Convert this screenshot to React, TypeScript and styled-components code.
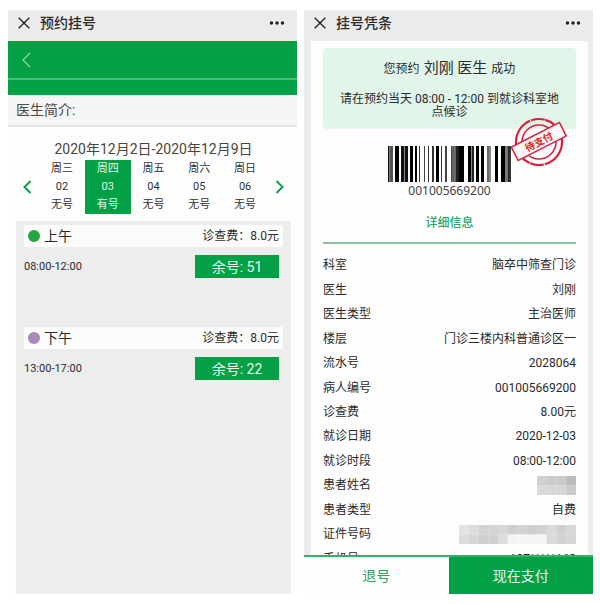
import React from 'react';
import styled, { createGlobalStyle } from 'styled-components';

const GREEN = '#03a045';

const GlobalStyle = createGlobalStyle`
  * { box-sizing: border-box; }
  body {
    margin: 0;
    background: #fff;
    color: #2b2b2b;
    font-family: Roboto, "Noto Sans CJK SC", sans-serif;
    font-size: 12px;
    line-height: 18px;
  }
  button { font: inherit; border: 0; padding: 0; background: none; color: inherit; cursor: pointer; }
  h1, h2, p, dl, dd { margin: 0; font-weight: 400; }
`;

const Page = styled.div`
  display: grid;
  grid-template-columns: 1fr 1fr;
  gap: 7px;
  height: 100vh;
  padding: 10px 7px 10px 8px;
`;

const Phone = styled.main`
  display: flex;
  flex-direction: column;
  min-width: 0;
  min-height: 0;
  background: #fdfdfd;
`;

const TitleBar = styled.header`
  display: flex;
  align-items: center;
  flex: none;
  height: 31px;
  padding: 0 12px 6px 10px;
  gap: 10px;
  background: #ebebeb;
  color: #1d1d1d;
`;

const Title = styled.h1`
  flex: 1;
  font-size: 14px;
  line-height: 20px;
  font-weight: 500;
  color: #2b2b2b;
`;

const IconButton = styled.button`
  display: flex;
  align-items: center;
  justify-content: center;
`;

const NavBar = styled.nav`
  display: flex;
  flex: none;
  height: 39px;
  padding: 0 14px;
  background: ${GREEN};
  border-bottom: 2px solid #4fb97c;
`;

const NavShade = styled.div`
  flex: none;
  height: 15px;
  background: ${GREEN};
`;

const Intro = styled.h2`
  flex: none;
  padding: 4px 8px;
  font-size: 14px;
  line-height: 22px;
  color: #4a4a4a;
  background: #f5f5f5;
  border-bottom: 2px solid #e4e4e4;
`;

const Week = styled.section`
  flex: none;
  padding: 12px 6px 7px 8px;
`;

const Range = styled.p`
  margin-bottom: 1px;
  font-size: 14px;
  line-height: 20px;
  text-align: center;
  color: #4b463a;
`;

const DayRow = styled.div`
  display: grid;
  grid-template-columns: 23px repeat(5, 1fr) 23px;
`;

const Day = styled.button<{ $active?: boolean }>`
  && {
    display: flex;
    flex-direction: column;
    align-items: center;
    font-size: 11px;
    line-height: 18px;
    color: ${p => (p.$active ? '#e6f7ec' : '#333')};
    background: ${p => (p.$active ? GREEN : 'transparent')};
  }
`;

const Sessions = styled.section`
  display: flex;
  flex-direction: column;
  flex: 1;
  gap: 49px;
  margin: 0 6px 0 8px;
  padding: 4px 8px;
  background: #ededed;
`;

const SessionHead = styled.div`
  display: flex;
  align-items: center;
  height: 22px;
  padding: 0 4px;
  gap: 4px;
  background: #fcfcfc;
`;

const Dot = styled.span<{ $color: string }>`
  width: 12px;
  height: 12px;
  border-radius: 50%;
  background: ${p => p.$color};
`;

const SessionName = styled.h2`
  flex: 1;
  font-size: 14px;
`;

const SessionBody = styled.div`
  display: flex;
  align-items: center;
  justify-content: space-between;
  padding: 8px 4px 0 0;
  font-size: 11px;
`;

const SlotButton = styled.button`
  width: 84px;
  height: 23px;
  && { font-size: 14px; color: #e9f8ee; background: ${GREEN}; }
`;

const Backdrop = styled.div`
  flex: 1;
  min-height: 0;
  padding: 0 5px 0 7px;
  background: #ececf0;
`;

const Card = styled.div`
  height: 100%;
  overflow: hidden;
  padding: 7px 12px 0;
  background: #fdfdfd;
`;

const Notice = styled.section`
  position: relative;
  padding: 10px 12px;
  border-radius: 4px;
  background: #e2f5e9;
  text-align: center;
`;

const NoticeLine = styled.p`
  line-height: 20px;
  margin-bottom: 14px;
`;

const Doctor = styled.span`
  margin: 0 4px;
  font-size: 15px;
`;

const NoticeText = styled.p`
  line-height: 13px;
`;

const Stamp = styled.svg`
  position: absolute;
  right: 8px;
  bottom: -39px;
`;

const CodeBlock = styled.figure`
  display: flex;
  flex-direction: column;
  align-items: center;
  margin: 17px 0 0;
`;

const CodeNumber = styled.figcaption`
  font-family: "Noto Sans", sans-serif;
  font-size: 12px;
  line-height: 17px;
  color: #444;
`;

const DetailTitle = styled.h2`
  padding: 15px 0 10px;
  font-size: 12px;
  font-weight: 500;
  text-align: center;
  color: #35a266;
  border-bottom: 2px solid #83c39e;
`;

const Details = styled.dl`
  display: grid;
  grid-auto-rows: 1fr;
  min-height: 318px;
  margin-top: 9px;
`;

const Detail = styled.div`
  display: flex;
  align-items: center;
  justify-content: space-between;
`;

const ActionBar = styled.footer`
  display: grid;
  grid-template-columns: 1fr 1fr;
  flex: none;
  height: 39px;
  border-top: 2px solid #35b069;
`;

const Action = styled.button<{ $primary?: boolean }>`
  && {
    font-size: 14px;
    color: ${p => (p.$primary ? '#e9f8ee' : '#2ba35c')};
    background: ${p => (p.$primary ? GREEN : '#fdfdfd')};
  }
`;

const Header = ({ title }: { title: string }) => (
  <TitleBar>
    <IconButton aria-label="关闭">
      <svg width="12" height="12" viewBox="0 0 12 12" stroke="#1d1d1d" strokeWidth="1.3">
        <path d="M.7 .7 11.3 11.3M11.3 .7 .7 11.3" />
      </svg>
    </IconButton>
    <Title>{title}</Title>
    <IconButton aria-label="更多">
      <svg width="16" height="6" viewBox="0 0 16 6" fill="#1d1d1d">
        <circle cx="2.5" cy="3" r="1.7" />
        <circle cx="8" cy="3" r="1.7" />
        <circle cx="13.5" cy="3" r="1.7" />
      </svg>
    </IconButton>
  </TitleBar>
);

const days = [
  ['周三', '02', '无号'],
  ['周四', '03', '有号'],
  ['周五', '04', '无号'],
  ['周六', '05', '无号'],
  ['周日', '06', '无号'],
];

const sessions = [
  { name: '上午', color: '#22a73f', time: '08:00-12:00', left: 51 },
  { name: '下午', color: '#a987b8', time: '13:00-17:00', left: 22 },
];

// Each bar: x, width, shade.
const bars: [number, number, string][] = [
  [0, 1, '#111'], [1, 1, '#777'], [2, 3, '#555'], [7, 4, '#000'], [13, 3, '#111'], [16, 1, '#888'], [17, 3, '#111'],
  [22, 3, '#000'], [27, 2, '#000'], [31, 1, '#333'], [36, 1, '#444'], [40, 1, '#333'], [44, 2, '#333'],
  [48, 3, '#000'], [53, 1, '#333'], [57, 2, '#444'], [63, 1, '#444'], [64, 4, '#666'], [68, 3, '#222'],
  [71, 5, '#000'], [80, 3, '#000'], [83, 1, '#888'], [84, 2, '#222'], [88, 3, '#000'], [93, 3, '#000'],
  [99, 2, '#666'], [101, 2, '#888'], [107, 3, '#000'], [113, 4, '#000'], [117, 3, '#777'], [120, 1, '#222'], [121, 2, '#333'],
];

const Barcode = () => (
  <svg width="123" height="36" viewBox="0 0 123 36" role="img" aria-label="001005669200">
    {bars.map(([x, w, c]) => (
      <rect key={x} x={x} width={w} height="36" fill={c} />
    ))}
  </svg>
);

const MosaicDrawing = styled.svg`
  display: block;
`;

const Mosaic = ({ rows, cell, width }: { rows: string[][]; cell: number; width: number }) => (
  <MosaicDrawing width={width} height="19" viewBox={`0 0 ${width} 19`} aria-label="已隐藏" role="img">
    {rows.map((row, y) =>
      row.map((c, x) => <rect key={`${x}-${y}`} x={x * cell} y={y * 9.5} width={cell + 0.2} height="9.6" fill={c} />),
    )}
  </MosaicDrawing>
);

const details: [string, React.ReactNode][] = [
  ['科室', '脑卒中筛查门诊'],
  ['医生', '刘刚'],
  ['医生类型', '主治医师'],
  ['楼层', '门诊三楼内科普通诊区一'],
  ['流水号', '2028064'],
  ['病人编号', '001005669200'],
  ['诊查费', '8.00元'],
  ['就诊日期', '2020-12-03'],
  ['就诊时段', '08:00-12:00'],
  [
    '患者姓名',
    <Mosaic
      width={39}
      cell={9.75}
      rows={[
        ['#d0d0d0', '#cbcbcb', '#c9c9c9', '#bababa'],
        ['#dadada', '#d8d8d8', '#d6d6d6', '#cacaca'],
      ]}
    />,
  ],
  ['患者类型', '自费'],
  [
    '证件号码',
    <Mosaic
      width={117}
      cell={9.75}
      rows={[
        ['#e4e4e4', '#dddddd', '#d2d2d2', '#d4d4d4', '#d8d8d8', '#cfcfcf', '#d3d3d3', '#cecece', '#d2d2d2', '#d9d9d9', '#cfcfcf', '#d8d8d8'],
        ['#dcdcdc', '#d6d6d6', '#cecece', '#d0d0d0', '#dedede', '#f4f4f4', '#f6f6f6', '#f4f4f4', '#f5f5f5', '#dadada', '#d2d2d2', '#d6d6d6'],
      ]}
    />,
  ],
  ['手机号', '187*****163'],
];

export default function App() {
  return (
    <>
      <GlobalStyle />
      <Page>
        <Phone>
          <Header title="预约挂号" />
          <NavBar>
            <IconButton aria-label="返回">
              <svg width="9" height="16" viewBox="0 0 9 16" fill="none" stroke="#9ad9b3" strokeWidth="1.1">
                <path d="M8 1 1 8l7 7" />
              </svg>
            </IconButton>
          </NavBar>
          <NavShade />
          <Intro>医生简介:</Intro>
          <Week>
            <Range>2020年12月2日-2020年12月9日</Range>
            <DayRow>
              <IconButton aria-label="上一周">
                <svg width="9" height="14" viewBox="0 0 9 14" fill="none" stroke={GREEN} strokeWidth="1.9">
                  <path d="M7.5 1 1.5 7l6 6" />
                </svg>
              </IconButton>
              {days.map(([week, date, state]) => (
                <Day key={date} $active={state === '有号'}>
                  <span>{week}</span>
                  <span>{date}</span>
                  <span>{state}</span>
                </Day>
              ))}
              <IconButton aria-label="下一周">
                <svg width="9" height="14" viewBox="0 0 9 14" fill="none" stroke={GREEN} strokeWidth="1.9">
                  <path d="M1.5 1l6 6-6 6" />
                </svg>
              </IconButton>
            </DayRow>
          </Week>
          <Sessions>
            {sessions.map(s => (
              <article key={s.name}>
                <SessionHead>
                  <Dot $color={s.color} />
                  <SessionName>{s.name}</SessionName>
                  <span>诊查费：8.0元</span>
                </SessionHead>
                <SessionBody>
                  <time>{s.time}</time>
                  <SlotButton>余号: {s.left}</SlotButton>
                </SessionBody>
              </article>
            ))}
          </Sessions>
        </Phone>

        <Phone>
          <Header title="挂号凭条" />
          <Backdrop>
            <Card>
              <Notice>
                <NoticeLine>
                  您预约<Doctor>刘刚 医生</Doctor>成功
                </NoticeLine>
                <NoticeText>请在预约当天 08:00 - 12:00 到就诊科室地点候诊</NoticeText>
                <Stamp width="58" height="52" viewBox="0 0 58 52" role="img" aria-label="待支付">
                  <g fill="none" stroke="#d8203f">
                    <circle cx="29" cy="26" r="23" strokeWidth="2.2" strokeDasharray="30 1 14 .6 22 1" />
                    <circle cx="29" cy="26" r="17" strokeWidth="1.6" />
                  </g>
                  <g transform="rotate(-27 29 26)">
                    <rect x="2" y="18" width="54" height="15" fill="#fdf7f7" stroke="#d8203f" strokeWidth="1.5" />
                    <text x="29" y="29.5" textAnchor="middle" fontSize="10" fontWeight="700" fill="#d92a22">
                      待支付
                    </text>
                  </g>
                </Stamp>
              </Notice>
              <CodeBlock>
                <Barcode />
                <CodeNumber>001005669200</CodeNumber>
              </CodeBlock>
              <DetailTitle>详细信息</DetailTitle>
              <Details>
                {details.map(([label, value]) => (
                  <Detail key={label}>
                    <dt>{label}</dt>
                    <dd>{value}</dd>
                  </Detail>
                ))}
              </Details>
            </Card>
          </Backdrop>
          <ActionBar>
            <Action>退号</Action>
            <Action $primary>现在支付</Action>
          </ActionBar>
        </Phone>
      </Page>
    </>
  );
}
